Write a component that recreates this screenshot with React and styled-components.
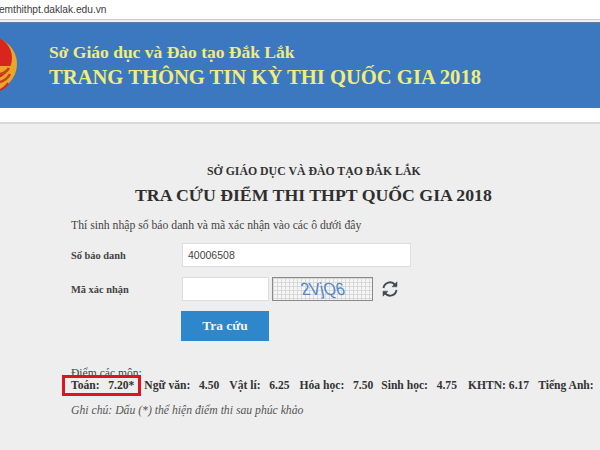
import React from 'react';
import styled, { createGlobalStyle } from 'styled-components';

const serif = '"Liberation Serif", "Times New Roman", serif';
const sans = '"Liberation Sans", Arial, sans-serif';

const GlobalStyle = createGlobalStyle`
  html, body {
    margin: 0;
    padding: 0;
    width: 600px;
    height: 450px;
    overflow: hidden;
    background: #eeeeee;
  }
`;

const Page = styled.div`
  width: 600px;
  height: 450px;
  overflow: hidden;
  display: flex;
  flex-direction: column;
  font-family: ${serif};
`;

const AddressBar = styled.div`
  height: 19px;
  background: #fff;
  border-bottom: 1px solid #c9ccd6;
  font-family: ${sans};
  font-size: 10.2px;
  line-height: 19px;
  color: #3c3c3c;
  white-space: nowrap;
  overflow: hidden;
  text-indent: -9px;
`;

const Banner = styled.header`
  height: 85px;
  margin-top: 2px;
  background: #3b78bf;
  border-top: 1px solid #5a7fb0;
  display: flex;
  align-items: flex-start;
  overflow: hidden;
`;

const Emblem = styled.svg`
  width: 18px;
  height: 58px;
  margin-top: 13px;
  flex: none;
`;

const BannerText = styled.div`
  margin-left: 31px;
  color: #f2ec7c;
  font-weight: bold;
  white-space: nowrap;
`;

const BannerSub = styled.div`
  font-size: 17.5px;
  line-height: 20px;
  margin-top: 19px;
`;

const BannerTitle = styled.div`
  font-size: 20.6px;
  line-height: 24px;
  margin-top: 3px;
`;

const WhiteStrip = styled.div`
  height: 14px;
  background: #fff;
  border-bottom: 2px solid #d9d9d9;
`;

const Content = styled.main`
  flex: 1;
  background: #eeeeee;
  color: #333;
  padding-left: 71px;
`;

const Department = styled.div`
  margin: 39px 0 0 136px;
  font-size: 11.8px;
  line-height: 16px;
  font-weight: bold;
  color: #333;
  white-space: nowrap;
`;

const Heading = styled.h1`
  margin: 4px 0 0 64px;
  font-size: 17.75px;
  line-height: 24px;
  font-weight: bold;
  color: #2f2f2f;
  white-space: nowrap;
`;

const Intro = styled.p`
  margin: 11px 0 0;
  font-size: 11.7px;
  line-height: 16px;
  color: #444;
`;

const FormRow = styled.div`
  display: flex;
  align-items: center;
  height: 24px;
  margin-top: ${(p) => p.$top}px;
`;

const Label = styled.label`
  width: 111px;
  flex: none;
  font-size: 10.4px;
  font-weight: bold;
  color: #444;
`;

const Input = styled.input`
  box-sizing: border-box;
  width: ${(p) => p.$width}px;
  height: 24px;
  padding: 0 5px;
  border: 1px solid #dedede;
  outline: none;
  background: #fff;
  font-family: ${sans};
  font-size: 10.5px;
  color: #444;
`;

const Captcha = styled.div`
  box-sizing: border-box;
  width: 101px;
  height: 24px;
  margin-left: 3px;
  border: 1px solid #8a8a8a;
  background-color: #f6f6f6;
  background-image:
    linear-gradient(#d8d8d8 1px, transparent 1px),
    linear-gradient(90deg, #d8d8d8 1px, transparent 1px);
  background-size: 4px 4px;
  display: flex;
  align-items: center;
  justify-content: center;
  overflow: hidden;
`;

const CaptchaText = styled.span`
  font-family: ${sans};
  font-size: 16px;
  color: #5486c6;
  letter-spacing: -0.2px;
  transform: skewX(12deg) scaleY(1.1);
`;

const RefreshIcon = styled.svg`
  width: 18px;
  height: 18px;
  margin-left: 8px;
  margin-top: -1px;
  flex: none;
`;

const SubmitButton = styled.button`
  display: block;
  width: 88px;
  height: 30px;
  margin: 10px 0 0 110px;
  padding: 0;
  border: none;
  background: #2e86cb;
  color: #f4f4f4;
  font-family: ${serif};
  font-size: 13.4px;
  font-weight: bold;
`;

const Scores = styled.div`
  margin-top: 26px;
  font-size: 11.6px;
  line-height: 13px;
  color: #444;
`;

const ScoreRow = styled.div`
  position: relative;
  display: flex;
  margin-top: -1px;
  font-weight: bold;
  color: #333;
  white-space: nowrap;
`;

const Score = styled.span`
  margin-right: ${(p) => p.$gap}px;
  white-space: pre;
`;

const Highlight = styled.div`
  position: absolute;
  left: -9px;
  top: -4px;
  width: 79px;
  height: 21px;
  box-sizing: border-box;
  border: 3px solid #e0141f;
`;

const Note = styled.p`
  margin: 12px 0 0;
  font-size: 11.7px;
  line-height: 14px;
  font-style: italic;
  color: #555;
`;

const scores = [
  { text: 'Toán:   7.20*', gap: 10 },
  { text: 'Ngữ văn:   4.50', gap: 10 },
  { text: 'Vật lí:   6.25', gap: 10 },
  { text: 'Hóa học:   7.50', gap: 8 },
  { text: 'Sinh học:   4.75', gap: 11 },
  { text: 'KHTN: 6.17', gap: 9 },
  { text: 'Tiếng Anh:', gap: 0 },
];

const App = () => (
  <Page>
    <GlobalStyle />
    <AddressBar>diemthithpt.daklak.edu.vn</AddressBar>
    <Banner>
      <Emblem viewBox="0 0 18 58">
        <circle cx="-10" cy="28" r="27" fill="#e8a72a" />
        <circle cx="-10" cy="22" r="22" fill="#d8261f" />
        <path d="M-2 30h18l-6 7H-2z" fill="#e8a72a" />
        <path d="M0 38q6-1 9-6M0 46q7-2 10-8" stroke="#c8401c" strokeWidth="2.500" fill="none" />
        <path d="M0 54q6-3 8-7" stroke="#d8261f" strokeWidth="2" fill="none" />
      </Emblem>
      <BannerText>
        <BannerSub>Sở Giáo dục và Đào tạo Đắk Lắk</BannerSub>
        <BannerTitle>TRANG THÔNG TIN KỲ THI QUỐC GIA 2018</BannerTitle>
      </BannerText>
    </Banner>
    <WhiteStrip />
    <Content>
      <Department>SỞ GIÁO DỤC VÀ ĐÀO TẠO ĐẮK LẮK</Department>
      <Heading>TRA CỨU ĐIỂM THI THPT QUỐC GIA 2018</Heading>
      <Intro>Thí sinh nhập số báo danh và mã xác nhận vào các ô dưới đây</Intro>
      <FormRow $top={9}>
        <Label>Số báo danh</Label>
        <Input $width={229} defaultValue="40006508" />
      </FormRow>
      <FormRow $top={10}>
        <Label>Mã xác nhận</Label>
        <Input $width={87} />
        <Captcha>
          <CaptchaText>2VjQ6</CaptchaText>
        </Captcha>
        <RefreshIcon viewBox="0 0 18 18" fill="none" stroke="#3f4a50" strokeWidth="1.900">
          <path d="M2.500 8A6.500 6.500 0 0 1 14 4.800" />
          <path d="M15.500 10A6.500 6.500 0 0 1 4 13.200" />
          <path d="M16 1.800v5h-5z" fill="#3f4a50" strokeWidth="0.500" />
          <path d="M2 16.200v-5h5z" fill="#3f4a50" strokeWidth="0.500" />
        </RefreshIcon>
      </FormRow>
      <SubmitButton>Tra cứu</SubmitButton>
      <Scores>
        Điểm các môn:
        <ScoreRow>
          <Highlight />
          {scores.map((s) => (
            <Score key={s.text} $gap={s.gap}>{s.text}</Score>
          ))}
        </ScoreRow>
      </Scores>
      <Note>Ghi chú: Dấu (*) thể hiện điểm thi sau phúc khảo</Note>
    </Content>
  </Page>
);

export default App;
